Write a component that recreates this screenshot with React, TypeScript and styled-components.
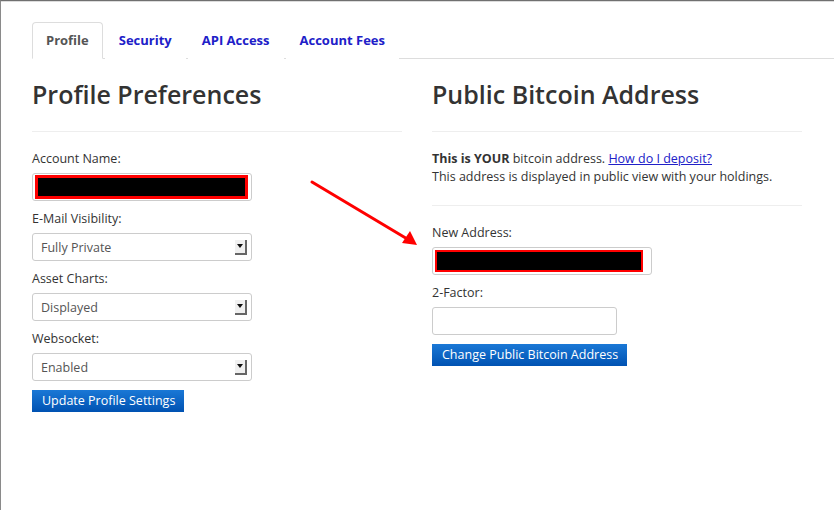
import React from 'react'
import styled, { createGlobalStyle } from 'styled-components'

const GlobalStyle = createGlobalStyle`
    html, body {
        margin: 0;
        padding: 0;
        background: #fff;
    }
    body {
        font-family: "Open Sans", "DejaVu Sans", sans-serif;
        font-size: 12.5px;
        color: #333;
    }
`

const Frame = styled.div`
    position: relative;
    box-sizing: border-box;
    min-height: 510px;
    border-top: 1px solid #707070;
    border-left: 1px solid #8a8a8a;
    box-shadow: inset 0 1px 0 #dcdcdc;
    padding: 21px 0 0 31px;
    overflow: hidden;
`

const Tabs = styled.ul`
    display: flex;
    list-style: none;
    margin: 0;
    padding: 0;
    border-bottom: 1px solid #ddd;
`

const Tab = styled.li<{ $active?: boolean }>`
    margin: 0 2px -1px 0;
    padding: 0 13px;
    height: 35px;
    line-height: 35px;
    font-weight: 700;
    font-size: 13px;
    color: ${p => (p.$active ? '#555' : '#2020c8')};
    background: #fff;
    border: 1px solid ${p => (p.$active ? '#ddd' : 'transparent')};
    border-bottom-color: ${p => (p.$active ? '#fff' : 'transparent')};
    border-radius: 4px 4px 0 0;
    cursor: pointer;
`

const Columns = styled.div`
    display: grid;
    grid-template-columns: 370px 370px;
    column-gap: 30px;
`

const Column = styled.section`
    display: flex;
    flex-direction: column;
    align-items: flex-start;
`

const Heading = styled.h2`
    margin: 17px 0 0 0;
    font-size: 25px;
    line-height: 36px;
    font-weight: 600;
    color: #333;
`

const Rule = styled.hr`
    align-self: stretch;
    margin: 19px 0 18px 0;
    border: 0;
    border-top: 1px solid #eee;
`

const Label = styled.label`
    display: block;
    line-height: 18px;
    color: #333;
`

const Field = styled.div<{ $w?: number }>`
    box-sizing: border-box;
    width: ${p => p.$w || 220}px;
    height: 28px;
    margin: 5px 0 9px 0;
    border: 1px solid #ccc;
    border-radius: 3px;
    padding: 2px;
    display: flex;
    align-items: center;
    background: #fff;
`

const Redacted = styled.div<{ $w: number; $h: number; $bw: number }>`
    box-sizing: border-box;
    width: ${p => p.$w}px;
    height: ${p => p.$h}px;
    background: #000;
    border: ${p => p.$bw}px solid #f00;
`

const Select = styled.div`
    box-sizing: border-box;
    width: 220px;
    height: 28px;
    margin: 5px 0 9px 0;
    border: 1px solid #ccc;
    border-radius: 3px;
    padding: 0 4px 0 8px;
    display: flex;
    align-items: center;
    justify-content: space-between;
    color: #555;
`

const SelectArrow = styled.span`
    box-sizing: border-box;
    width: 12px;
    height: 15px;
    background: #f0f0f0;
    border-right: 2px solid #666;
    border-bottom: 2px solid #666;
    display: flex;
    align-items: center;
    justify-content: center;
    &::after {
        content: '';
        border-left: 3px solid transparent;
        border-right: 3px solid transparent;
        border-top: 4px solid #111;
    }
`

const Button = styled.button`
    height: 22px;
    padding: 0 9px 0 10px;
    border: 0;
    border-radius: 0;
    background: linear-gradient(#1a78d6, #0052b2);
    color: #fff;
    font-family: inherit;
    font-size: 12.5px;
    line-height: 22px;
    cursor: pointer;
`

const Note = styled.p`
    margin: 0;
    line-height: 18px;
    color: #333;
`

const Link = styled.a`
    color: #2020c8;
    text-decoration: underline;
`

const Arrow = styled.svg`
    position: absolute;
    left: 300px;
    top: 170px;
`

const SelectBox: React.FC<{ value: string }> = ({ value }) => (
    <Select>
        <span>{value}</span>
        <SelectArrow />
    </Select>
)

const App: React.FC = () => {
    return (
        <Frame>
            <GlobalStyle />
            <Tabs>
                <Tab $active>Profile</Tab>
                <Tab>Security</Tab>
                <Tab>API Access</Tab>
                <Tab>Account Fees</Tab>
            </Tabs>
            <Columns>
                <Column>
                    <Heading>Profile Preferences</Heading>
                    <Rule />
                    <Label>Account Name:</Label>
                    <Field>
                        <Redacted $w={213} $h={24} $bw={3} />
                    </Field>
                    <Label>E-Mail Visibility:</Label>
                    <SelectBox value="Fully Private" />
                    <Label>Asset Charts:</Label>
                    <SelectBox value="Displayed" />
                    <Label>Websocket:</Label>
                    <SelectBox value="Enabled" />
                    <Button>Update Profile Settings</Button>
                </Column>
                <Column>
                    <Heading>Public Bitcoin Address</Heading>
                    <Rule />
                    <Note>
                        <b>This is YOUR</b> bitcoin address. <Link href="#">How do I deposit?</Link>
                    </Note>
                    <Note>This address is displayed in public view with your holdings.</Note>
                    <Rule />
                    <Label>New Address:</Label>
                    <Field>
                        <Redacted $w={208} $h={22} $bw={2} />
                    </Field>
                    <Label>2-Factor:</Label>
                    <Field $w={185} />
                    <Button>Change Public Bitcoin Address</Button>
                </Column>
            </Columns>
            <Arrow width="130" height="85" viewBox="0 0 130 85">
                <line x1="11" y1="11" x2="108" y2="69" stroke="#f00" strokeWidth="3" strokeLinecap="round" />
                <polygon points="116,74 101,72 109,60" fill="#f00" />
            </Arrow>
        </Frame>
    )
}

export default App
